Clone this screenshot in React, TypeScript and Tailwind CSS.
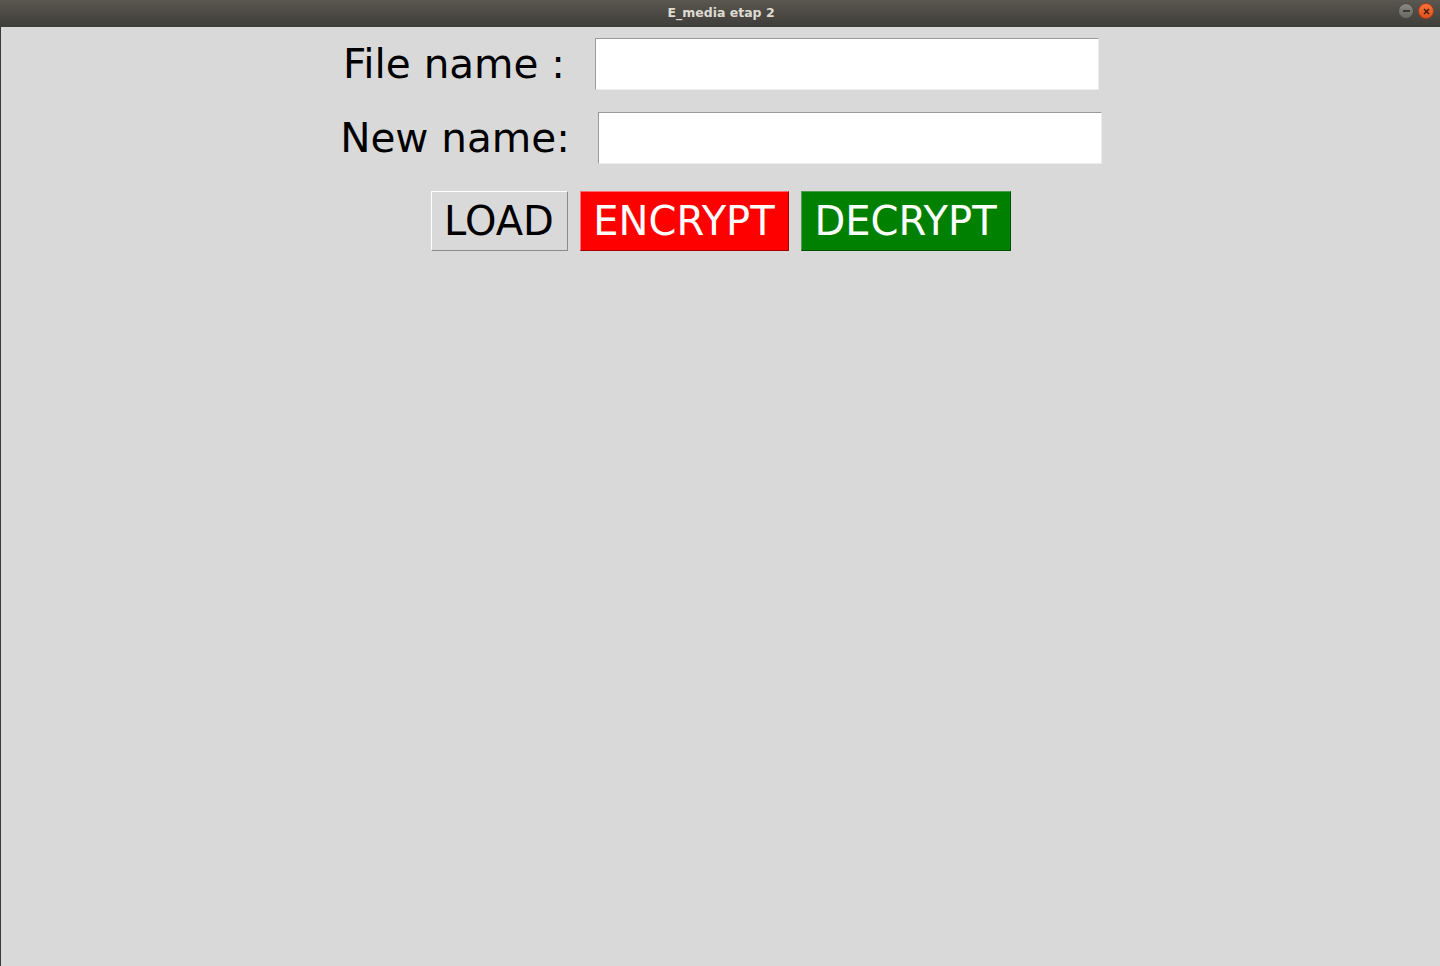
export default function App() {
  return (
    <div className="flex h-[966px] w-[1440px] flex-col overflow-hidden bg-[#d9d9d9] font-['DejaVu_Sans',sans-serif]">
      {/* title bar */}
      <div className="relative flex h-[27px] shrink-0 items-center justify-center bg-gradient-to-b from-[#5a5750] to-[#3f3d39]">
        <span className="pl-[2px] text-[12.5px] font-bold text-[#dfdbd2]">E_media etap 2</span>
        <div className="absolute right-[6px] top-[3px] flex items-center gap-[4px]">
          <div className="flex h-[16px] w-[16px] items-center justify-center rounded-full border border-[#4a4844] bg-gradient-to-b from-[#8a8882] to-[#6a6863]">
            <div className="h-[1.5px] w-[7px] bg-[#3a3936]" />
          </div>
          <div className="flex h-[16px] w-[16px] items-center justify-center rounded-full border border-[#b33c12] bg-gradient-to-b from-[#f4733c] to-[#e0501c]">
            <svg width="7" height="7" viewBox="0 0 7 7">
              <path d="M1 1 L6 6 M6 1 L1 6" stroke="#3b1a0c" strokeWidth="1.4" />
            </svg>
          </div>
        </div>
      </div>

      {/* body */}
      <div className="flex flex-1 flex-col items-center border-l border-[#3a3a3a] pt-[11px] text-black">
        <div className="ml-[1px] flex h-[52px] items-center">
          <span className="text-[40.5px] leading-[47px]">File name :</span>
          <div className="ml-[30px] h-[52px] w-[504px] border-t border-l border-t-[#9a9a9a] border-l-[#9a9a9a] border-r border-b border-r-[#ececec] border-b-[#ececec] bg-white" />
        </div>
        <div className="ml-[1px] mt-[22px] flex h-[52px] items-center">
          <span className="text-[40.5px] leading-[47px]">New name:</span>
          <div className="ml-[28px] h-[52px] w-[504px] border-t border-l border-t-[#9a9a9a] border-l-[#9a9a9a] border-r border-b border-r-[#ececec] border-b-[#ececec] bg-white" />
        </div>
        <div className="mt-[27px] flex gap-[12px]">
          <button className="flex h-[60px] w-[137px] items-center justify-center border border-t-white border-l-white border-r-[#8a8a8a] border-b-[#8a8a8a] bg-[#d9d9d9] text-[40px] leading-none text-black">
            LOAD
          </button>
          <button className="flex h-[60px] w-[209px] items-center justify-center border border-t-[#ff6a6a] border-l-[#ff6a6a] border-r-[#a00000] border-b-[#a00000] bg-[#ff0000] text-[40px] leading-none text-white">
            ENCRYPT
          </button>
          <button className="flex h-[60px] w-[210px] items-center justify-center border border-t-[#4c9e4c] border-l-[#4c9e4c] border-r-[#005000] border-b-[#005000] bg-[#008000] text-[40px] leading-none text-white">
            DECRYPT
          </button>
        </div>
      </div>
    </div>
  );
}
